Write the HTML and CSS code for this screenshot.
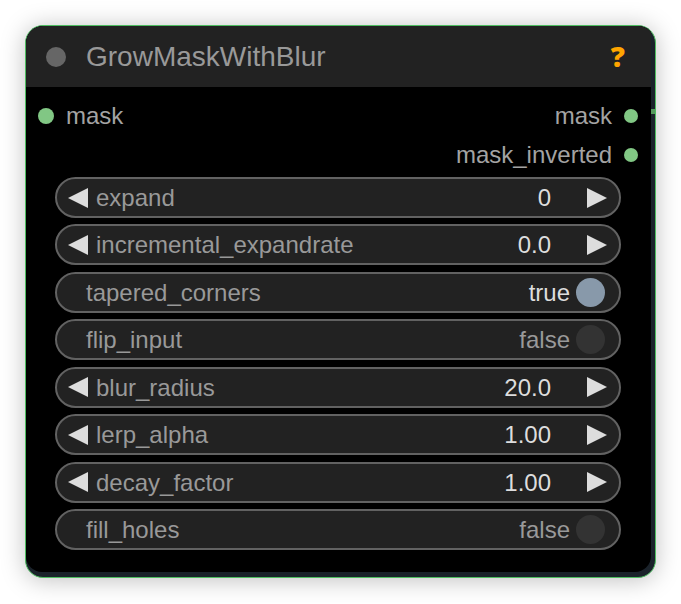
FILE: index.html
```html
<!DOCTYPE html>
<html lang="en">
<head>
<meta charset="utf-8">
<title>GrowMaskWithBlur</title>
<link rel="stylesheet" href="styles.css">
</head>
<body>
<div class="frame">
	<form class="node">
		<div class="title-bar">
			<span class="collapse"></span>
			<h1 class="title">GrowMaskWithBlur</h1>
			<button type="button" class="help">?</button>
		</div>
		<div class="slots">
			<ul class="inputs">
				<li><span class="dot"></span>mask</li>
			</ul>
			<ul class="outputs">
				<li>mask<span class="dot"></span></li>
				<li>mask_inverted<span class="dot"></span></li>
			</ul>
		</div>
		<div class="widgets">
			<div class="widget">
				<button type="button" class="arrow" aria-label="decrease expand"><svg viewBox="0 0 20 20"><path d="M0 10L20 0V20Z"/></svg></button>
				<label for="expand">expand</label>
				<input type="text" class="value" id="expand" value="0">
				<button type="button" class="arrow" aria-label="increase expand"><svg viewBox="0 0 20 20"><path d="M20 10L0 0V20Z"/></svg></button>
			</div>
			<div class="widget">
				<button type="button" class="arrow" aria-label="decrease incremental_expandrate"><svg viewBox="0 0 20 20"><path d="M0 10L20 0V20Z"/></svg></button>
				<label for="incremental_expandrate">incremental_expandrate</label>
				<input type="text" class="value" id="incremental_expandrate" value="0.0">
				<button type="button" class="arrow" aria-label="increase incremental_expandrate"><svg viewBox="0 0 20 20"><path d="M20 10L0 0V20Z"/></svg></button>
			</div>
			<div class="widget toggle">
				<label for="tapered_corners">tapered_corners</label>
				<span class="state on">true</span>
				<input type="checkbox" class="knob" id="tapered_corners" checked>
			</div>
			<div class="widget toggle">
				<label for="flip_input">flip_input</label>
				<span class="state">false</span>
				<input type="checkbox" class="knob" id="flip_input">
			</div>
			<div class="widget">
				<button type="button" class="arrow" aria-label="decrease blur_radius"><svg viewBox="0 0 20 20"><path d="M0 10L20 0V20Z"/></svg></button>
				<label for="blur_radius">blur_radius</label>
				<input type="text" class="value" id="blur_radius" value="20.0">
				<button type="button" class="arrow" aria-label="increase blur_radius"><svg viewBox="0 0 20 20"><path d="M20 10L0 0V20Z"/></svg></button>
			</div>
			<div class="widget">
				<button type="button" class="arrow" aria-label="decrease lerp_alpha"><svg viewBox="0 0 20 20"><path d="M0 10L20 0V20Z"/></svg></button>
				<label for="lerp_alpha">lerp_alpha</label>
				<input type="text" class="value" id="lerp_alpha" value="1.00">
				<button type="button" class="arrow" aria-label="increase lerp_alpha"><svg viewBox="0 0 20 20"><path d="M20 10L0 0V20Z"/></svg></button>
			</div>
			<div class="widget">
				<button type="button" class="arrow" aria-label="decrease decay_factor"><svg viewBox="0 0 20 20"><path d="M0 10L20 0V20Z"/></svg></button>
				<label for="decay_factor">decay_factor</label>
				<input type="text" class="value" id="decay_factor" value="1.00">
				<button type="button" class="arrow" aria-label="increase decay_factor"><svg viewBox="0 0 20 20"><path d="M20 10L0 0V20Z"/></svg></button>
			</div>
			<div class="widget toggle">
				<label for="fill_holes">fill_holes</label>
				<span class="state">false</span>
				<input type="checkbox" class="knob" id="fill_holes">
			</div>
		</div>
	</form>
	<span class="wire"></span>
</div>
</body>
</html>
```
FILE: styles.css
```css
* {margin:0;padding:0;box-sizing:border-box;}
ul {list-style:none;}
body {background:#fff;padding:25px;font-family:"Liberation Sans",Arial,sans-serif;font-size:24px;line-height:39px;color:#a3a3a3;}
button, input {font:inherit;color:inherit;background:none;border:none;}
.frame {position:relative;padding:0 4px 5px 0;background:#1a222a;border:1px solid #4ebd60;border-radius:18px;overflow:hidden;box-shadow:0 2px 24px rgba(0,0,0,.25);}
.node {background:#000;border-radius:16px 0 16px 16px;overflow:hidden;}

.title-bar {display:flex;align-items:center;height:61px;padding:0 26px 0 20px;background:#222;}
.collapse {width:20px;height:20px;border-radius:50%;background:#666;}
.title {flex:1;margin-left:20px;font-size:28px;font-weight:normal;color:#999;}
.help {font-family:"Noto Sans",sans-serif;font-size:28px;font-weight:900;color:#ffa500;cursor:pointer;}

.slots {display:flex;justify-content:space-between;padding:9px 13px 0 12px;}
.slots li {display:flex;align-items:center;gap:12px;}
.outputs li {justify-content:flex-end;}
.dot {width:16px;height:16px;border-radius:50%;background:#81c784;}
.outputs .dot {width:14px;height:14px;}
/* the link that leaves the mask output */
.wire {position:absolute;top:83px;right:0;width:4px;height:5px;background:#55995c;}

.widgets {display:flex;flex-direction:column;justify-content:space-between;min-height:373px;margin:3px 30px 22px 29px;}
.widget {display:flex;align-items:center;height:41px;padding:0 12px 0 11px;background:#222;border:2px solid #626262;border-radius:21px;color:#999;}
.toggle {padding:0 14px 0 29px;}
.widget label {margin-left:8px;}
.toggle label {flex:1;margin-left:0;}
.arrow {width:20px;height:20px;cursor:pointer;}
.arrow svg {display:block;width:20px;height:20px;fill:#ddd;}
.value {flex:1;min-width:0;height:37px;margin-right:36px;text-align:right;color:#ddd;}
.state {margin-right:6px;}
.on {color:#ddd;}
.knob {appearance:none;width:29px;height:29px;border-radius:50%;background:#333;cursor:pointer;}
.knob:checked {background:#8899aa;}
```
